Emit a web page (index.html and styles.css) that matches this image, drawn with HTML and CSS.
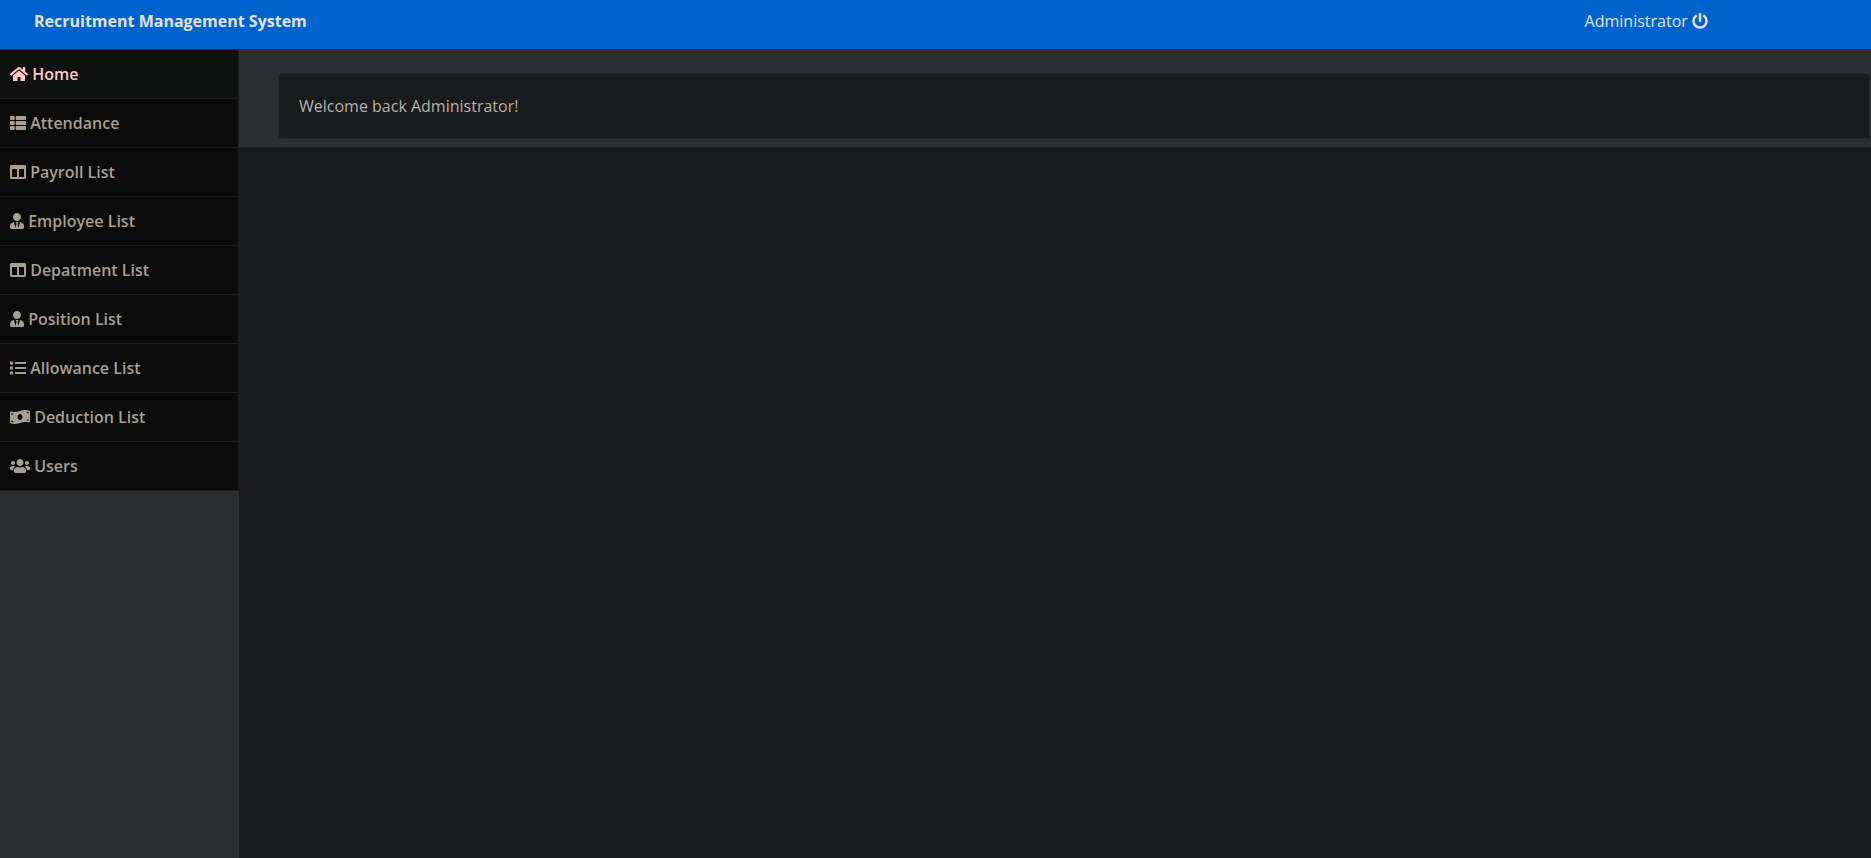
FILE: index.html
```
<!DOCTYPE html>
<html lang="en">
<head>
    <meta charset="UTF-8">
    <meta name="viewport" content="width=device-width, initial-scale=1">
    <title>Recruitment Management System</title>
    <link rel="stylesheet" href="styles.css">
</head>
<body>

<header class="topbar">
    <div class="brand">Recruitment Management System</div>
    <a class="logout" href="#">Administrator <svg class="icon" viewBox="0 0 512 512"><path d="M400 54.1c63 45 104 118.6 104 201.9 0 136.8-110.8 247.7-247.5 248C120 504.3 8.2 393 8 256.4 7.9 173.1 48.9 99.3 111.8 54.2c11.7-8.3 28-4.8 35 7.7L162.6 90c5.9 10.5 3.1 23.8-6.6 31-41.5 30.8-68 79.6-68 134.9-.1 92.3 74.5 168.1 168 168.1 91.6 0 168.6-74.2 168-169.1-.3-51.8-24.7-101.8-68.1-134-9.7-7.2-12.4-20.5-6.5-30.9l15.8-28.1c7-12.4 23.2-16.1 34.8-7.8zM296 264V24c0-13.3-10.7-24-24-24h-32c-13.3 0-24 10.7-24 24v240c0 13.3 10.7 24 24 24h32c13.3 0 24-10.7 24-24z"/></svg></a>
</header>

<svg class="sprite">
    <symbol id="i-columns" viewBox="0 0 512 512"><path d="M464 32H48C21.49 32 0 53.49 0 80v352c0 26.51 21.49 48 48 48h416c26.51 0 48-21.49 48-48V80c0-26.51-21.49-48-48-48zM224 416H64V160h160v256zm224 0H288V160h160v256z"/></symbol>
    <symbol id="i-user-tie" viewBox="0 0 448 512"><path d="M224 256c70.7 0 128-57.3 128-128S294.7 0 224 0 96 57.3 96 128s57.3 128 128 128zm95.8 32.6L272 480l-32-136 32-56h-96l32 56-32 136-47.8-191.4C56.9 292 0 350.3 0 422.4V464c0 26.5 21.5 48 48 48h352c26.5 0 48-21.5 48-48v-41.6c0-72.1-56.9-130.4-128.2-133.8z"/></symbol>
</svg>

<div class="layout">
    <nav class="sidebar">
        <div class="sidebar-list">
            <a class="nav-item active" href="#"><svg class="icon w18" viewBox="0 0 576 512"><path d="M280.37 148.26L96 300.11V464a16 16 0 0 0 16 16l112.06-.29a16 16 0 0 0 15.92-16V368a16 16 0 0 1 16-16h64a16 16 0 0 1 16 16v95.64a16 16 0 0 0 16 16.05L464 480a16 16 0 0 0 16-16V300L295.67 148.26a12.19 12.19 0 0 0-15.3 0zM571.6 251.47L488 182.56V44.05a12 12 0 0 0-12-12h-56a12 12 0 0 0-12 12v72.61L318.47 43a48 48 0 0 0-61 0L4.34 251.47a12 12 0 0 0-1.6 16.9l25.5 31A12 12 0 0 0 45.15 301l235.22-193.74a12.19 12.19 0 0 1 15.3 0L530.9 301a12 12 0 0 0 16.9-1.6l25.5-31a12 12 0 0 0-1.7-16.93z"/></svg> Home</a>
            <a class="nav-item" href="#"><svg class="icon" viewBox="0 0 512 512"><path d="M149.333 216v80c0 13.255-10.745 24-24 24H24c-13.255 0-24-10.745-24-24v-80c0-13.255 10.745-24 24-24h101.333c13.255 0 24 10.745 24 24zM0 376v80c0 13.255 10.745 24 24 24h101.333c13.255 0 24-10.745 24-24v-80c0-13.255-10.745-24-24-24H24c-13.255 0-24 10.745-24 24zM125.333 32H24C10.745 32 0 42.745 0 56v80c0 13.255 10.745 24 24 24h101.333c13.255 0 24-10.745 24-24V56c0-13.255-10.745-24-24-24zm80 448H488c13.255 0 24-10.745 24-24v-80c0-13.255-10.745-24-24-24H205.333c-13.255 0-24 10.745-24 24v80c0 13.255 10.745 24 24 24zm-24-424v80c0 13.255 10.745 24 24 24H488c13.255 0 24-10.745 24-24V56c0-13.255-10.745-24-24-24H205.333c-13.255 0-24 10.745-24 24zm24 264H488c13.255 0 24-10.745 24-24v-80c0-13.255-10.745-24-24-24H205.333c-13.255 0-24 10.745-24 24v80c0 13.255 10.745 24 24 24z"/></svg> Attendance</a>
            <a class="nav-item" href="#"><svg class="icon"><use href="#i-columns"/></svg> Payroll List</a>
            <a class="nav-item" href="#"><svg class="icon w14"><use href="#i-user-tie"/></svg> Employee List</a>
            <a class="nav-item" href="#"><svg class="icon"><use href="#i-columns"/></svg> Depatment List</a>
            <a class="nav-item" href="#"><svg class="icon w14"><use href="#i-user-tie"/></svg> Position List</a>
            <a class="nav-item" href="#"><svg class="icon" viewBox="0 0 512 512"><path d="M80 368H16a16 16 0 0 0-16 16v64a16 16 0 0 0 16 16h64a16 16 0 0 0 16-16v-64a16 16 0 0 0-16-16zm0-320H16A16 16 0 0 0 0 64v64a16 16 0 0 0 16 16h64a16 16 0 0 0 16-16V64a16 16 0 0 0-16-16zm0 160H16a16 16 0 0 0-16 16v64a16 16 0 0 0 16 16h64a16 16 0 0 0 16-16v-64a16 16 0 0 0-16-16zm416 176H176a16 16 0 0 0-16 16v32a16 16 0 0 0 16 16h320a16 16 0 0 0 16-16v-32a16 16 0 0 0-16-16zm0-320H176a16 16 0 0 0-16 16v32a16 16 0 0 0 16 16h320a16 16 0 0 0 16-16V80a16 16 0 0 0-16-16zm0 160H176a16 16 0 0 0-16 16v32a16 16 0 0 0 16 16h320a16 16 0 0 0 16-16v-32a16 16 0 0 0-16-16z"/></svg> Allowance List</a>
            <a class="nav-item" href="#"><svg class="icon w20" viewBox="0 0 640 512"><path d="M621.16 54.46C582.37 38.19 543.55 32 504.75 32c-123.17-.01-246.33 62.34-369.5 62.34-30.89 0-61.76-3.92-92.65-13.72-3.47-1.1-6.95-1.62-10.35-1.62C15.04 79 0 92.32 0 110.81v317.26c0 12.63 7.23 24.6 18.84 29.46C57.63 473.81 96.45 480 135.25 480c123.17 0 246.34-62.35 369.51-62.35 30.89 0 61.76 3.92 92.65 13.72 3.47 1.1 6.95 1.62 10.35 1.62 17.21 0 32.25-13.32 32.25-31.81V83.93c-.01-12.64-7.24-24.6-18.85-29.47zM48 132.22c20.12 5.04 41.12 7.57 62.72 8.93C104.84 170.54 79 192.69 48 192.69v-60.47zm0 285v-47.78c34.37 0 62.18 27.27 63.71 61.4-22.53-1.81-43.59-6.31-63.71-13.62zM320 352c-44.19 0-80-42.99-80-96 0-53.02 35.82-96 80-96s80 42.98 80 96c0 53.03-35.83 96-80 96zm272 27.78c-17.52-4.39-35.71-6.85-54.32-8.44 5.87-26.08 27.5-45.88 54.32-49.28v57.72zm0-236.11c-30.89-3.91-54.86-29.7-55.81-61.55 19.54 2.17 38.09 6.23 55.81 12.66v48.89z"/></svg> Deduction List</a>
            <a class="nav-item" href="#"><svg class="icon w20" viewBox="0 0 640 512"><path d="M96 224c35.3 0 64-28.7 64-64s-28.7-64-64-64-64 28.7-64 64 28.7 64 64 64zm448 0c35.3 0 64-28.7 64-64s-28.7-64-64-64-64 28.7-64 64 28.7 64 64 64zm32 32h-64c-17.6 0-33.5 7.1-45.1 18.6 40.3 22.1 68.9 62 75.1 109.4h66c17.7 0 32-14.3 32-32v-32c0-35.3-28.7-64-64-64zm-256 0c61.9 0 112-50.1 112-112S381.9 32 320 32 208 82.1 208 144s50.1 112 112 112zm76.8 32h-8.3c-20.8 10-43.9 16-68.5 16s-47.6-6-68.5-16h-8.3C179.6 288 128 339.6 128 403.2V432c0 26.5 21.5 48 48 48h288c26.5 0 48-21.5 48-48v-28.8c0-63.6-51.6-115.2-115.2-115.2zm-223.7-13.4C161.5 263.1 145.6 256 128 256H64c-35.3 0-64 28.7-64 64v32c0 17.7 14.3 32 32 32h65.9c6.3-47.4 34.9-87.3 75.2-109.4z"/></svg> Users</a>
        </div>
    </nav>

    <main class="view-panel">
        <div class="card">Welcome back Administrator!</div>
    </main>
</div>

</body>
</html>
```
FILE: styles.css
```
* {
    box-sizing: border-box;
}
body {
    margin: 0;
    min-height: 100vh;
    display: flex;
    flex-direction: column;
    background: #191b1c;
    color: #b8b2a9;
    font-family: "Open Sans", sans-serif;
    font-size: 16px;
    line-height: 24px;
}
a {
    text-decoration: none;
}
.sprite {
    display: none;
}
.icon {
    width: 16px;
    height: 16px;
    fill: currentColor;
    vertical-align: -2px;
}
.w14 {
    width: 14px;
}
.w18 {
    width: 18px;
}
.w20 {
    width: 20px;
}

/* top bar */
.topbar {
    display: flex;
    justify-content: space-between;
    align-items: flex-start;
    min-height: 49px;
    padding: 9px 163px 16px 34px;
    background: #0062cc;
    color: #e4e2df;
}
.brand {
    font-weight: 700;
}
.logout {
    color: #e4e2df;
}

.layout {
    flex: 1;
    display: flex;
}

/* sidebar */
.sidebar {
    flex: 0 0 239px;
    background: #2b2f31;
}
.sidebar-list {
    border: 1px solid #1b1c1b;
    border-width: 0 1px 1px 0;
    background: #0b0b0b;
}
.nav-item {
    display: block;
    padding: 12px 10px;
    border-top: 1px solid #1b1c1b;
    color: #a89e92;
    font-weight: 600;
}
.nav-item:hover,
.nav-item.active {
    background: #0f1110;
    color: #ffc9c9;
}

/* content */
.view-panel {
    flex: 1;
    align-self: flex-start;
    padding: 24px 1px 8px 39px;
    background: #2b2f31;
}
.card {
    padding: 20px;
    border: 1px solid #242628;
    border-radius: 4px;
    background: #191b1c;
}
```
